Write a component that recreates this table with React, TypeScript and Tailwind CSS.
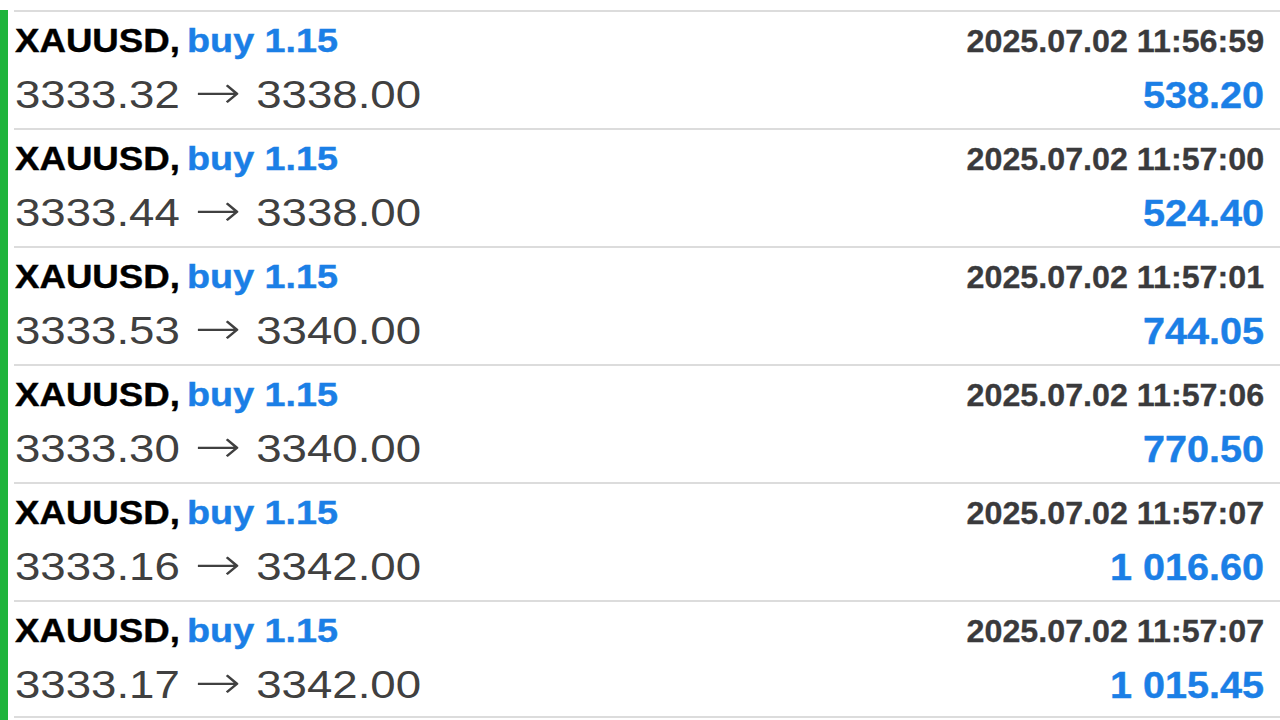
import React from "react";

const rows = [
  { open: "3333.32", close: "3338.00", time: "2025.07.02 11:56:59", profit: "538.20" },
  { open: "3333.44", close: "3338.00", time: "2025.07.02 11:57:00", profit: "524.40" },
  { open: "3333.53", close: "3340.00", time: "2025.07.02 11:57:01", profit: "744.05" },
  { open: "3333.30", close: "3340.00", time: "2025.07.02 11:57:06", profit: "770.50" },
  { open: "3333.16", close: "3342.00", time: "2025.07.02 11:57:07", profit: "1 016.60" },
  { open: "3333.17", close: "3342.00", time: "2025.07.02 11:57:07", profit: "1 015.45" },
];

export default function App() {
  return (
    <div
      className="w-[1280px] h-[720px] bg-white overflow-hidden pt-[10px]"
      style={{ fontFamily: '"Liberation Sans", Arial, sans-serif' }}
    >
      <div className="flex h-[710px]">
        <div className="w-[8px] bg-[#1fb43c] shrink-0" />
        <div className="flex-1 ml-[6px]">
          {rows.map((r, i) => (
            <div
              key={i}
              className={
                "h-[118px] border-t-2 border-[#dcdcdc] pt-[9px] pr-[16px] pl-px" +
                (i === rows.length - 1 ? " border-b-2" : "")
              }
            >
              <div className="flex items-baseline justify-between h-[40px] leading-[40px]">
                <span className="inline-block origin-left scale-x-[1.11] text-[33px] font-bold whitespace-pre [word-spacing:-3px] [-webkit-text-stroke:0.4px_black]">
                  <span className="text-black">XAUUSD, </span>
                  <span className="inline-block origin-left scale-x-[1.03] text-[#1b7fe6] [word-spacing:0px] [-webkit-text-stroke:0.4px_#1b7fe6]">buy 1.15</span>
                </span>
                <span className="inline-block origin-right scale-x-[1.04] text-[31px] font-bold text-[#3a3a3c] whitespace-pre [-webkit-text-stroke:0.3px_#3a3a3c]">
                  {r.time}
                </span>
              </div>
              <div className="flex items-baseline justify-between h-[48px] leading-[48px] mt-[10px]">
                <span className="inline-block origin-left scale-x-[1.2] text-[38px] text-[#404040] whitespace-pre">
                  {r.open}{" "}
                  <span className="mx-[2px] text-[46px] leading-[40px] font-extralight" style={{ fontFamily: '"DejaVu Sans", sans-serif' }}>→</span>
                  {" "}{r.close}
                </span>
                <span className="inline-block origin-right scale-x-[1.1] text-[36px] font-bold text-[#1b7fe6] whitespace-pre [-webkit-text-stroke:0.4px_#1b7fe6]">
                  {r.profit}
                </span>
              </div>
            </div>
          ))}
        </div>
      </div>
    </div>
  );
}
